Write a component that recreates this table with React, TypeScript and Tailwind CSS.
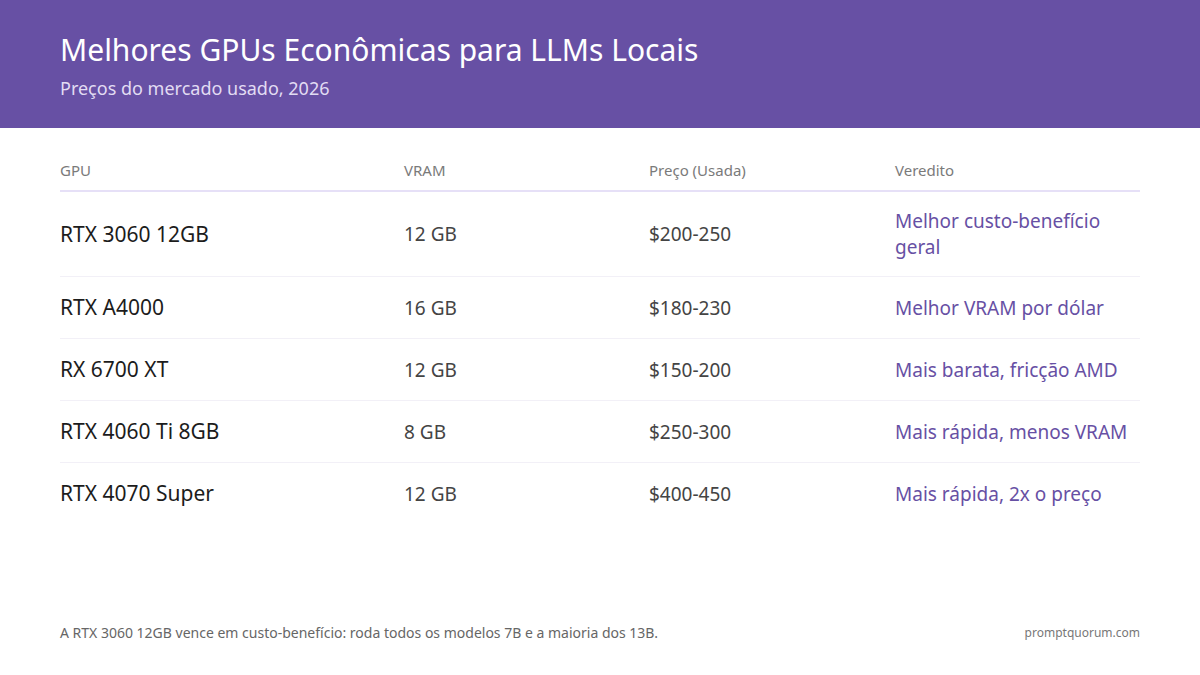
import React from 'react';

type Row = { gpu: string; vram: string; price: string; verdict: string };

const rows: Row[] = [
  { gpu: 'RTX 3060 12GB', vram: '12 GB', price: '$200-250', verdict: 'Melhor custo-benefício geral' },
  { gpu: 'RTX A4000', vram: '16 GB', price: '$180-230', verdict: 'Melhor VRAM por dólar' },
  { gpu: 'RX 6700 XT', vram: '12 GB', price: '$150-200', verdict: 'Mais barata, fricção AMD' },
  { gpu: 'RTX 4060 Ti 8GB', vram: '8 GB', price: '$250-300', verdict: 'Mais rápida, menos VRAM' },
  { gpu: 'RTX 4070 Super', vram: '12 GB', price: '$400-450', verdict: 'Mais rápida, 2x o preço' },
];

const cols = 'grid grid-cols-[344px_245px_246px_245px]';

export default function App() {
  return (
    <div className="w-[1200px] h-[675px] bg-white flex flex-col font-['Noto_Sans',sans-serif]">
      {/* Header */}
      <header className="h-[128px] bg-[#6750a4] px-[60px] pt-[29px]">
        <h1 className="text-[30px] leading-[42px] text-white">Melhores GPUs Econômicas para LLMs Locais</h1>
        <p className="mt-[4px] text-[18px] leading-[26px] text-[#e2dcf3]">Preços do mercado usado, 2026</p>
      </header>

      {/* Table */}
      <main className="flex-1 px-[60px]">
        <div className={`${cols} mt-[32px] border-b-2 border-[#e6e0f7] pb-[10px] text-[15px] leading-[20px] text-[#7a7a7a]`}>
          <div>GPU</div>
          <div>VRAM</div>
          <div>Preço (Usada)</div>
          <div>Veredito</div>
        </div>
        {rows.map((r, i) => (
          <div
            key={r.gpu}
            className={`${cols} items-center py-[16px] ${i < rows.length - 1 ? 'border-b border-[#f2f0f7]' : ''}`}
          >
            <div className="text-[21px] leading-[29px] text-[#1c1c1c]">{r.gpu}</div>
            <div className="text-[19px] leading-[26px] text-[#444]">{r.vram}</div>
            <div className="text-[19px] leading-[26px] text-[#444]">{r.price}</div>
            <div className="text-[19px] leading-[26px] text-[#6750a4]">{r.verdict}</div>
          </div>
        ))}
      </main>

      {/* Footer */}
      <footer className="flex items-center justify-between px-[60px] pb-[32px] leading-[20px]">
        <span className="text-[14px] text-[#666]">A RTX 3060 12GB vence em custo-benefício: roda todos os modelos 7B e a maioria dos 13B.</span>
        <span className="text-[12px] text-[#777]">promptquorum.com</span>
      </footer>
    </div>
  );
}
